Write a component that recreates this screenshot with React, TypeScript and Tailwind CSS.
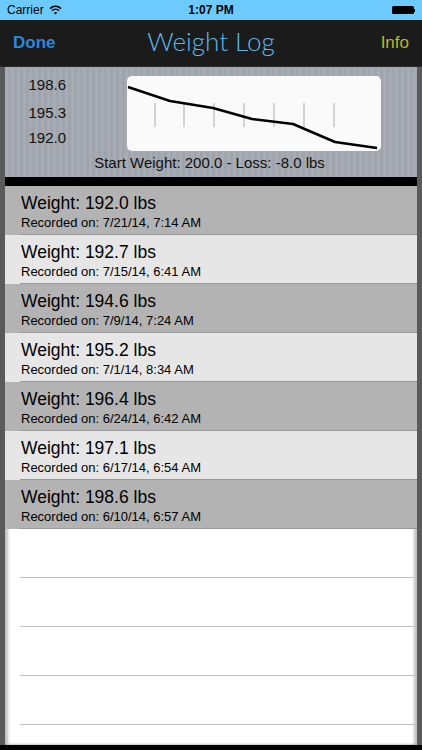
import React from 'react';

const entries = [
  { weight: '192.0', date: '7/21/14, 7:14 AM' },
  { weight: '192.7', date: '7/15/14, 6:41 AM' },
  { weight: '194.6', date: '7/9/14, 7:24 AM' },
  { weight: '195.2', date: '7/1/14, 8:34 AM' },
  { weight: '196.4', date: '6/24/14, 6:42 AM' },
  { weight: '197.1', date: '6/17/14, 6:54 AM' },
  { weight: '198.6', date: '6/10/14, 6:57 AM' },
];

const linePoints = '1,11 43,25 86,32 125,43 166,48 208,66 250,72';
const ticks = [28, 57, 87, 117, 147, 177, 207];

const StatusBar: React.FC = () => (
  <div className="relative h-[20px] bg-[#6ccbfc] flex items-center px-[7px] text-[12px] text-black">
    <span>Carrier</span>
    <svg className="ml-[5px]" width="13" height="10" viewBox="0 0 13 10">
      <path d="M1 3.6a7.8 7.8 0 0 1 11 0" stroke="black" strokeWidth="1.5" fill="none" />
      <path d="M3 5.7a5 5 0 0 1 7 0" stroke="black" strokeWidth="1.5" fill="none" />
      <path d="M6.5 9.5 4.9 7.7a2.3 2.3 0 0 1 3.2 0z" fill="black" />
    </svg>
    <span className="absolute left-0 right-0 text-center font-semibold">1:07 PM</span>
    <div className="ml-auto flex items-center">
      <div className="w-[22px] h-[8px] bg-black rounded-[1.5px]" />
      <div className="w-[1.5px] h-[3px] bg-black" />
    </div>
  </div>
);

const NavBar: React.FC = () => (
  <div className="relative h-[46px] bg-[#1b1b1b] flex items-center justify-between px-[13px]">
    <span className="text-[17px] font-bold text-[#2a88df]">Done</span>
    <span className="absolute left-0 right-0 text-center text-[26px] font-light text-[#5bb9ea] font-['Lato',sans-serif] pb-[3px]">
      Weight Log
    </span>
    <span className="text-[17px] text-[#bbb52a]">Info</span>
  </div>
);

const ChartPanel: React.FC = () => (
  <div className="bg-[repeating-linear-gradient(90deg,#a7abb3_0px,#a7abb3_3px,#a0a4ac_3px,#a0a4ac_6px)] pt-[9px] pb-[5px]">
    <div className="flex">
      <div className="w-[61px] flex flex-col items-end text-[15px] text-[#111] leading-[18px]">
        <span>198.6</span>
        <span className="mt-[10px]">195.3</span>
        <span className="mt-[7px]">192.0</span>
      </div>
      <div className="ml-[61px] w-[254px] h-[75px] bg-[#fafafa] rounded-[5px]">
        <svg width="254" height="75" viewBox="0 0 254 75">
          {ticks.map((x) => (
            <line key={x} x1={x} y1="27" x2={x} y2="51" stroke="#c4c4c4" strokeWidth="1.5" />
          ))}
          <polyline points={linePoints} fill="none" stroke="black" strokeWidth="2.5" strokeLinejoin="round" />
        </svg>
      </div>
    </div>
    <div className="mt-[3px] text-center text-[15px] leading-[18px] text-[#111] pr-[3px]">
      Start Weight: 200.0 - Loss: -8.0 lbs
    </div>
  </div>
);

const App: React.FC = () => {
  return (
    <div className="w-[422px] h-[750px] overflow-hidden flex flex-col font-['Liberation_Sans',Arial,sans-serif] bg-black">
      <StatusBar />
      <NavBar />
      <div className="flex-1 flex flex-col bg-[#5a5a5a] px-[5px] border-t border-[#2a2a2a]">
        <ChartPanel />
        <div className="h-[9px] bg-black" />
        <div className="flex-1 bg-white shadow-[inset_3px_0_3px_rgba(0,0,0,0.25),inset_-3px_0_3px_rgba(0,0,0,0.25)]">
          {entries.map((e, i) => (
            <div key={e.date} className={i % 2 === 0 ? 'bg-[#b3b3b3]' : 'bg-[#e6e6e6]'}>
              <div className="ml-[15px] pl-[1px] h-[49px] border-b border-[#999] pt-[7px]">
                <div className="text-[17.5px] leading-[20px] text-black">Weight: {e.weight} lbs</div>
                <div className="text-[13px] leading-[16px] mt-[2px] text-black">Recorded on: {e.date}</div>
              </div>
            </div>
          ))}
          {[0, 1, 2, 3].map((n) => (
            <div key={n} className="ml-[15px] h-[49px] border-b border-[#c2c2c2]" />
          ))}
        </div>
      </div>
      <div className="h-[5px] bg-black" />
    </div>
  );
};

export default App;
